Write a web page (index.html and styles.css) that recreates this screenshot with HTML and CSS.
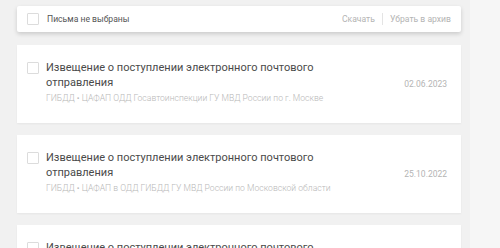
FILE: index.html
```html
<!DOCTYPE html>
<html lang="ru">
<head>
<meta charset="utf-8">
<link rel="stylesheet" href="styles.css">
</head>
<body>
<div class="main">
  <div class="toolbar">
    <span class="cb"></span>
    <span class="tb-label">Письма не выбраны</span>
    <div class="tb-actions">
      <span class="act">Скачать</span>
      <span class="sep"></span>
      <span class="act">Убрать в архив</span>
    </div>
  </div>
  <div class="list">
    <div class="card">
      <span class="cb"></span>
      <div class="body">
        <div class="title">Извещение о поступлении электронного почтового отправления</div>
        <div class="sub">ГИБДД • ЦАФАП ОДД Госавтоинспекции ГУ МВД России по г. Москве</div>
      </div>
      <div class="date">02.06.2023</div>
    </div>
    <div class="card">
      <span class="cb"></span>
      <div class="body">
        <div class="title">Извещение о поступлении электронного почтового отправления</div>
        <div class="sub">ГИБДД • ЦАФАП в ОДД ГИБДД ГУ МВД России по Московской области</div>
      </div>
      <div class="date">25.10.2022</div>
    </div>
    <div class="card">
      <span class="cb"></span>
      <div class="body">
        <div class="title">Извещение о поступлении электронного почтового отправления</div>
        <div class="sub">ГИБДД • ЦАФАП ОДД Госавтоинспекции ГУ МВД России по г. Москве</div>
      </div>
      <div class="date">12.03.2022</div>
    </div>
  </div>
</div>
</body>
</html>
```
FILE: styles.css
```css
html, body {
  margin: 0;
  padding: 0;
  background: #f6f6f6;
  font-family: Roboto, "Liberation Sans", sans-serif;
  overflow: hidden;
  height: 248px;
}
.main {
  width: 470px;
  height: 248px;
  overflow: hidden;
  background: #f1f1f1;
  padding: 6px 9px 0 17px;
  box-sizing: border-box;
}
.toolbar {
  height: 26px;
  background: #fff;
  display: flex;
  align-items: center;
  padding: 0 10px;
  box-shadow: 0 2px 4px rgba(0,0,0,0.16);
  border-radius: 2px;
}
.cb {
  width: 10px;
  height: 10px;
  border: 1px solid #dcdcdc;
  border-radius: 1px;
  flex: none;
  background: #fff;
}
.tb-label {
  margin-left: 8px;
  font-size: 8.6px;
  color: #555;
}
.tb-actions {
  margin-left: auto;
  display: flex;
  align-items: center;
  font-size: 8.6px;
  color: #b4b4b4;
}
.sep {
  width: 1px;
  height: 12px;
  background: #e4e4e4;
  margin: 0 7px;
}
.list {
  margin-top: 13px;
  display: flex;
  flex-direction: column;
  gap: 12px;
}
.card {
  background: #fff;
  height: 78px;
  flex: none;
  box-sizing: border-box;
  display: flex;
  align-items: center;
  padding: 0 14px 0 10px;
  box-shadow: 0 1px 2px rgba(0,0,0,0.05);
}
.card .cb {
  align-self: flex-start;
  margin-top: 17px;
}
.body {
  margin-left: 7px;
  flex: 1;
  align-self: flex-start;
  padding-top: 15px;
}
.title {
  font-size: 11px;
  line-height: 15px;
  color: #4a4a4a;
  width: 300px;
}
.sub {
  font-size: 8.6px;
  line-height: 12px;
  margin-top: 2px;
  color: #b8b8b8;
  font-weight: 300;
}
.date {
  font-size: 8.5px;
  color: #b4b4b4;
}
```
